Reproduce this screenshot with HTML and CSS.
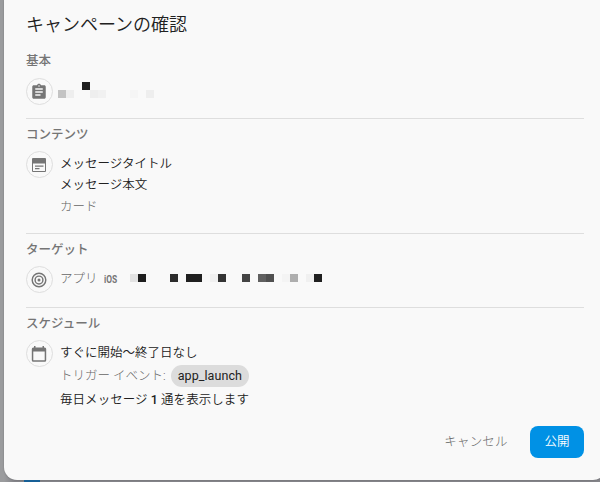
FILE: index.html
```html
<!DOCTYPE html>
<html lang="ja">
<head>
<meta charset="utf-8">
<title>キャンペーンの確認</title>
<link rel="stylesheet" href="styles.css">
</head>
<body>
<main class="dialog">
  <h1 class="title">キャンペーンの確認</h1>
  <section class="section basic">
    <h2>基本</h2>
    <div class="row">
      <span class="icon"><svg width="18" height="18" viewBox="0 0 24 24"><path d="M19 3h-4.180C14.400 1.840 13.300 1 12 1s-2.400.840-2.820 2H5c-1.100 0-2 .900-2 2v14c0 1.100.900 2 2 2h14c1.100 0 2-.900 2-2V5c0-1.100-.900-2-2-2zm-7 0c.550 0 1 .450 1 1s-.450 1-1 1-1-.450-1-1 .450-1 1-1zm2 14H7v-2h7v2zm3-4H7v-2h10v2zm0-4H7V7h10v2z"/></svg></span>
      <svg class="mask name" width="96" height="16" shape-rendering="crispEdges"><path fill="#c3c3c3" d="M0 8h8v8H0z"/><path fill="#eee" d="M8 8h8v8H8zM32 8h8v8h-8zM88 8h8v8h-8z"/><path fill="#1f1f1f" d="M24 0h8v8h-8z"/><path fill="#f1f1f1" d="M40 8h8v8h-8z"/><path fill="#f5f5f5" d="M72 8h8v8h-8z"/></svg>
    </div>
  </section>
  <section class="section content">
    <h2>コンテンツ</h2>
    <div class="row">
      <span class="icon"><svg width="18" height="18" viewBox="0 0 18 18"><path fill-rule="evenodd" d="M3 2h12q1 0 1 1v12q0 1-1 1H3q-1 0-1-1V3q0-1 1-1zM3 7.500V15h12V7.500zM5 9.500h8.500v1.200H5zM5 12h4.500v1.200H5z"/></svg></span>
      <div class="lines"><p>メッセージタイトル</p><p>メッセージ本文</p><p class="muted">カード</p></div>
    </div>
  </section>
  <section class="section target">
    <h2>ターゲット</h2>
    <div class="row">
      <span class="icon"><svg width="18" height="18" viewBox="0 0 18 18"><g fill="none" stroke="#757575" stroke-width="1.450"><circle cx="9" cy="9" r="6.800"/><circle cx="9" cy="9" r="3.900"/></g><circle cx="9" cy="9" r="1.500"/></svg></span>
      <p class="muted app">アプリ</p>
      <span class="ios">iOS</span>
      <svg class="mask" width="192" height="8" shape-rendering="crispEdges"><path fill="#e3e3e3" d="M0 0h8v8H0z"/><path fill="#1e1e1e" d="M8 0h8v8H8z"/><path fill="#2c2c2c" d="M40 0h8v8h-8z"/><path fill="#202020" d="M56 0h16v8H56zM184 0h8v8h-8z"/><path fill="#f7f7f7" d="M72 0h8v8h-8z"/><path fill="#f0f0f0" d="M80 0h8v8h-8zM176 0h8v8h-8z"/><path fill="#343434" d="M88 0h8v8h-8z"/><path fill="#444" d="M112 0h8v8h-8z"/><path fill="#606060" d="M128 0h8v8h-8z"/><path fill="#505050" d="M136 0h8v8h-8z"/><path fill="#f4f4f4" d="M152 0h8v8h-8z"/><path fill="#aeaeae" d="M160 0h8v8h-8z"/></svg>
    </div>
  </section>
  <section class="section schedule">
    <h2>スケジュール</h2>
    <div class="row">
      <span class="icon"><svg width="18" height="18" viewBox="0 0 18 18"><path fill-rule="evenodd" d="M4 1h1.500v1.500h7V1H14v1.500h.700q1.500 0 1.500 1.500v11.200q0 1.500-1.500 1.500H3.300q-1.500 0-1.500-1.500V4q0-1.500 1.500-1.500H4zM3.300 6.500v8.700h11.400V6.500z"/></svg></span>
      <div class="lines"><p>すぐに開始〜終了日なし</p><p class="muted trigger">トリガー イベント:<span class="chip">app_launch</span></p><p class="rate">毎日メッセージ <b>1</b> 通を表示します</p></div>
    </div>
  </section>
  <footer class="actions"><button class="cancel">キャンセル</button><button class="publish">公開</button></footer>
</main>
<div class="behind"><span class="marker"></span></div>
</body>
</html>
```

FILE: styles.css
```css
* { box-sizing: border-box; }
body {
  margin: 0;
  width: 600px;
  height: 482px;
  overflow: hidden;
  background: linear-gradient(90deg, #9b9c9e 0 4px, #85858a 14px);
  font-family: Roboto, "Noto Sans CJK JP", sans-serif;
  font-size: 12.5px;
  color: #212121;
}
h1, h2, p { margin: 0; }
.dialog {
  width: 602px;
  height: 480px;
  margin-left: 4px;
  padding: 11px 24px 0 22px;
  background: #f9f9f9;
  border-radius: 0 0 13px 13px;
  box-shadow: 0 0 2px rgba(0, 0, 0, .25);
}
.title { height: 41px; font-size: 18px; line-height: 28px; font-weight: 350; }
.section { width: 558px; border-bottom: 1px solid #dedede; }
.basic { height: 67px; }
.content { height: 115px; padding-top: 7px; }
.target { height: 74px; padding-top: 7px; }
.schedule { height: 118px; padding-top: 7px; border: 0; }
h2 { height: 18px; font-size: 12.5px; line-height: 18px; font-weight: 500; color: #757575; }
.row { display: flex; align-items: flex-start; padding-top: 8px; }
.icon {
  display: flex;
  align-items: center;
  justify-content: center;
  flex: none;
  width: 27px;
  height: 27px;
  margin-right: 7px;
  border: 1px solid #dedede;
  border-radius: 50%;
}
.icon svg { fill: #757575; margin-left: -1px; }
.lines { flex: 1; padding-top: 1px; }
.lines p { height: 21.500px; line-height: 22px; white-space: nowrap; font-weight: 350; }
.lines .muted, .muted { color: #666; font-weight: 300; }
.mask { display: block; flex: none; }
.name { margin: 4px 0 0 -2px; }
.content .row { padding-top: 7px; }
.content .lines { padding-top: 2px; }
.content .lines p { height: 21px; }
.content .lines .muted { line-height: 24px; }
.target .row { align-items: center; padding-top: 7px; }
.app { width: 44px; line-height: 22px; margin-top: -2px; }
.ios { width: 32.5px; margin-right: -6.5px; color: #757575; font-size: 10.5px; font-weight: 700; line-height: 12px; transform: scaleX(.8); transform-origin: 0 50%; }
.target .mask { margin-top: -4px; }
.schedule .row { padding-top: 7px; }
.schedule .lines p { height: 23.500px; line-height: 24px; }
.schedule .lines .trigger { display: flex; align-items: center; }
.schedule .lines .rate { letter-spacing: .06px; }
.chip {
  height: 22px;
  margin-left: 5px;
  padding: 0 7px;
  border-radius: 11px;
  background: #dcdcdc;
  color: #212121;
  font-weight: 400;
  line-height: 22px;
  letter-spacing: .08px;
}
b { font-weight: 500; }
.actions { display: flex; justify-content: flex-end; width: 558px; }
button { border: 0; padding: 0; font: inherit; height: 32px; line-height: 32px; }
.cancel { width: 64px; margin-right: 22px; background: none; color: #666; font-weight: 300; white-space: nowrap; letter-spacing: .2px; }
.publish { width: 54px; border-radius: 8px; background: #0091e5; color: #fff; font-weight: 350; }
.behind { height: 2px; padding-left: 24px; }
.marker { display: block; width: 16px; height: 2px; background: #165f96; }
```
